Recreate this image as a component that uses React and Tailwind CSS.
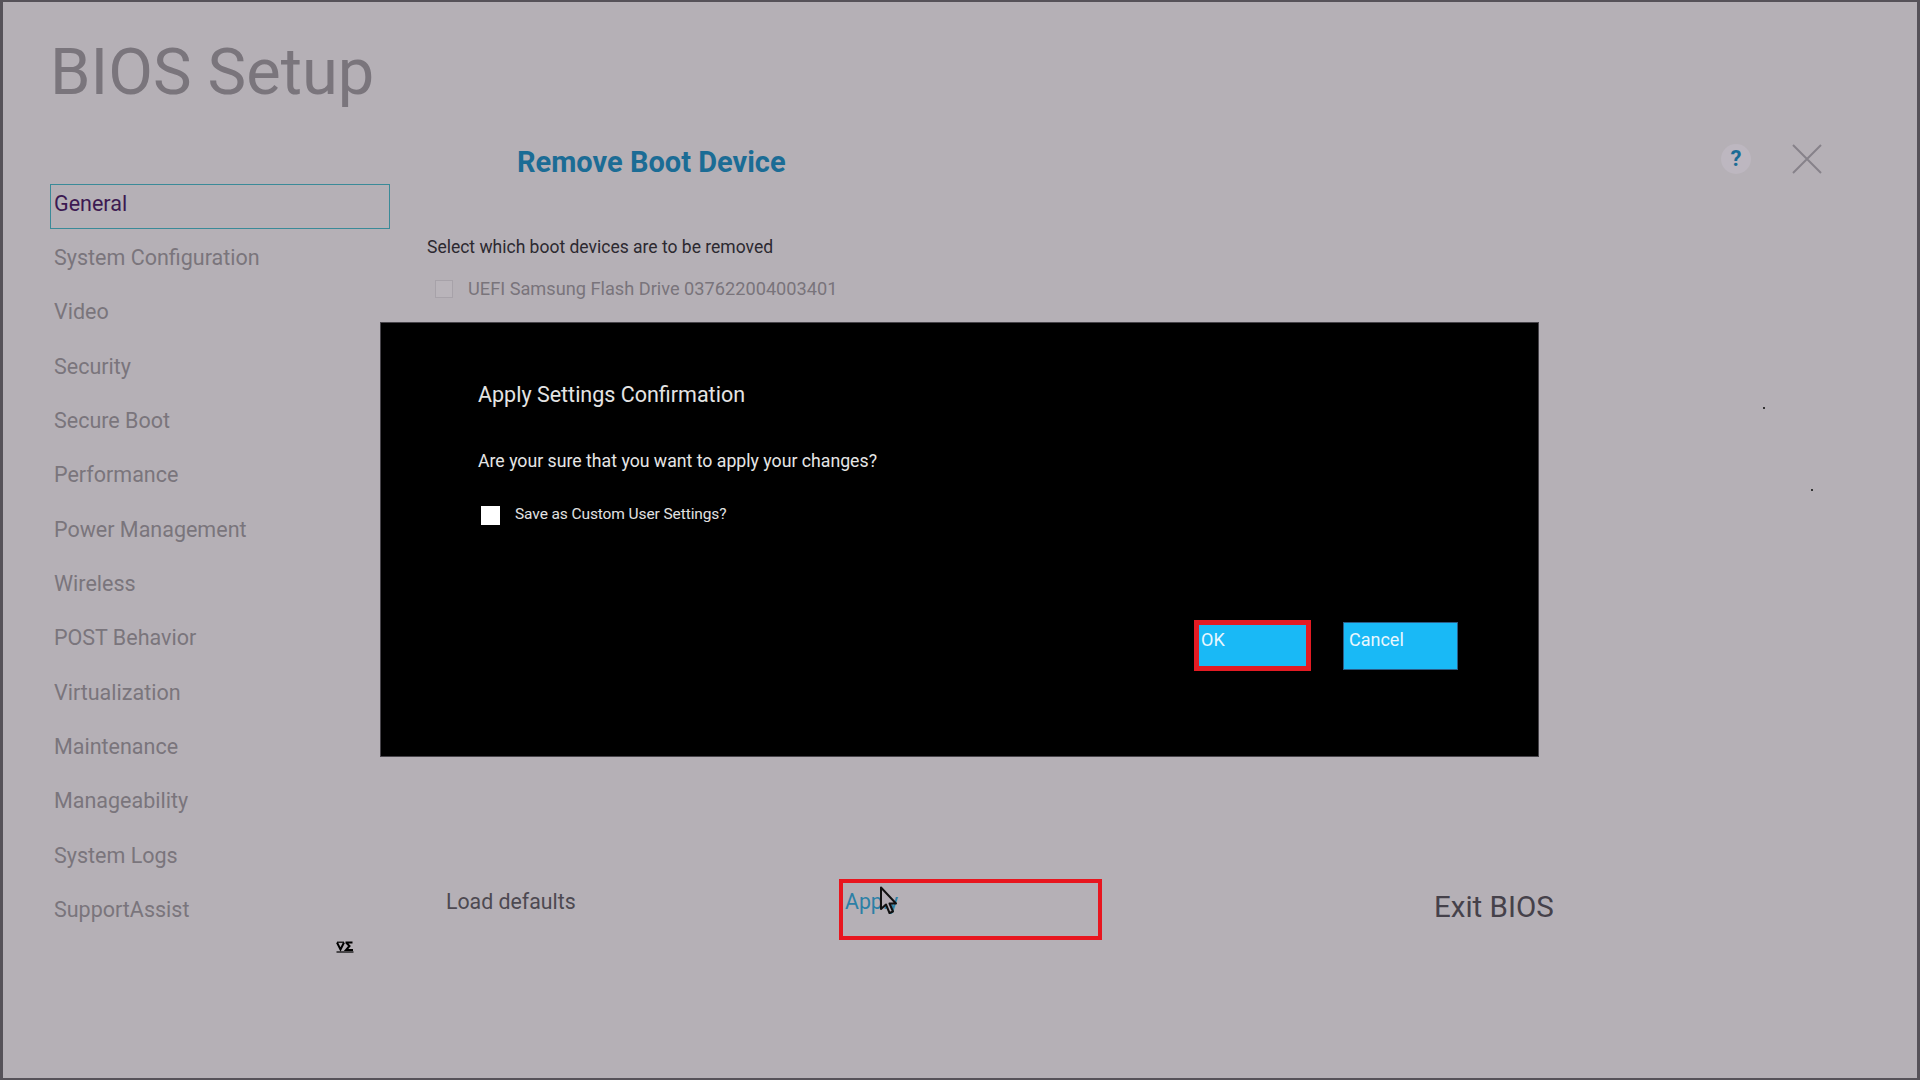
import React from 'react';

const menu = [
  'General',
  'System Configuration',
  'Video',
  'Security',
  'Secure Boot',
  'Performance',
  'Power Management',
  'Wireless',
  'POST Behavior',
  'Virtualization',
  'Maintenance',
  'Manageability',
  'System Logs',
  'SupportAssist',
];

function Cursor() {
  return (
    <svg width="20" height="30" viewBox="0 0 20 30" className="absolute left-[36px] top-[3px]">
      <path
        d="M2 1.5 L2 23 L7 18.5 L10.5 27 L14 25.5 L10.5 17.5 L17 17.5 Z"
        fill="#b3adb5"
        stroke="#111"
        strokeWidth="2"
        strokeLinejoin="round"
      />
    </svg>
  );
}

export default function App() {
  return (
    <div className="relative w-[1920px] h-[1080px] overflow-hidden bg-[#b5b0b6] border-l-[3px] border-r-[3px] border-t-2 border-b-2 border-[#565259] font-['Roboto',sans-serif] flex">
      {/* Sidebar */}
      <div className="w-[387px] shrink-0 pl-[47px] pt-[38px] flex flex-col">
        <h1 className="text-[65px] leading-[65px] text-[#7a757c] font-normal">BIOS Setup</h1>
        <div className="mt-[79px] flex flex-col gap-[9.35px]">
          {menu.map((item, i) => (
            <div
              key={item}
              className={`h-[45px] w-[340px] flex items-center pb-[6px] pl-[3px] border ${
                i === 0 ? 'border-[#3a8a98] text-[#3d1a52]' : 'border-transparent text-[#7a757c]'
              } text-[21.5px] leading-[26px]`}
            >
              {item}
            </div>
          ))}
        </div>
        <svg width="18" height="12" viewBox="0 0 18 12" className="mt-[6px] ml-[286px]">
          <path d="M1 1.5 L4.5 8.5 L8 1.5" fill="none" stroke="#000" strokeWidth="2" />
          <path d="M1 1.2 H8" stroke="#000" strokeWidth="1.2" />
          <path d="M9.5 1.5 H16.5 M10 1.5 L13.5 5 L10 9 H17" fill="none" stroke="#000" strokeWidth="2" />
          <path d="M0.5 11 H17.5" stroke="#000" strokeWidth="1.2" />
        </svg>
      </div>

      {/* Main */}
      <div className="flex-1 flex flex-col">
        <div className="mt-[142px] h-[36px] flex items-center pl-[127px] pr-[95px]">
          <h2 className="text-[29px] leading-[36px] font-bold text-[#1b6c95]">Remove Boot Device</h2>
          <div className="ml-auto flex items-center gap-[41px] mb-[7px]">
            <div className="w-[30px] h-[30px] rounded-full bg-[#bdb7c0] flex items-center justify-center text-[22px] font-bold text-[#1b6c95] leading-none">
              ?
            </div>
            <svg width="30" height="30" viewBox="0 0 30 30">
              <path d="M1 1 L29 29 M29 1 L1 29" stroke="#86828a" strokeWidth="2" />
            </svg>
          </div>
        </div>

        <p className="mt-[55px] pl-[37px] text-[17.5px] leading-[24px] text-[#2c2930]">
          Select which boot devices are to be removed
        </p>
        <div className="mt-[18px] pl-[45px] h-[24px] flex items-center gap-[15px]">
          <div className="w-[18px] h-[18px] border border-[#a7a2a9] bg-[#b9b4ba]" />
          <span className="text-[18.2px] text-[#79747b]">UEFI Samsung Flash Drive 037622004003401</span>
        </div>

        <div className="mt-[578px] flex items-start">
          <div className="w-[449px] pl-[56px] pt-[9px] text-[21.3px] leading-[28px] text-[#4d4951]">Load defaults</div>
          <div className="relative w-[263px] h-[61px] border-[4px] border-[#e8161f] pl-[2px] pt-[7px] text-[21.3px] leading-[24px] text-[#2c80a6]">
            Apply
            <Cursor />
          </div>
          <div className="ml-[332px] mt-[11px] text-[29.5px] leading-[34px] text-[#45414a]">Exit BIOS</div>
        </div>
      </div>

      {/* Confirmation dialog */}
      <div className="absolute left-[377px] top-[320px] w-[1159px] h-[435px] bg-black border border-[#47444a] pl-[97px] pr-[80px] pt-[58px] flex flex-col">
        <h3 className="text-[21.5px] leading-[28px] text-[#e4e4e4]">Apply Settings Confirmation</h3>
        <p className="mt-[40px] text-[17.7px] leading-[24px] text-[#e6e6e6]">
          Are your sure that you want to apply your changes?
        </p>
        <div className="mt-[32px] h-[20px] flex items-center gap-[15px]">
          <div className="ml-[3px] w-[19px] h-[19px] bg-white" />
          <span className="text-[15.5px] tracking-[-0.1px] text-[#e2e2e2]">Save as Custom User Settings?</span>
        </div>
        <div className="mt-[95px] flex justify-end items-start gap-[32px]">
          <button className="w-[117px] h-[51px] border-[5px] border-[#e31b23] bg-[#19b9f6] text-left pl-[2px] pt-[4px] text-[18px] leading-[22px] text-[#e8f7fe] flex items-start">
            OK
          </button>
          <button className="mt-[2px] w-[115px] h-[48px] border border-[#2b5c86] bg-[#19b9f6] text-left pl-[5px] pt-[6px] text-[18px] leading-[22px] text-[#e8f7fe] flex items-start">
            Cancel
          </button>
        </div>
      </div>

      {/* stray dots */}
      <div className="absolute left-[1760px] top-[405px] w-[2px] h-[2px] bg-[#333]" />
      <div className="absolute left-[1808px] top-[487px] w-[2px] h-[2px] bg-[#333]" />
    </div>
  );
}
